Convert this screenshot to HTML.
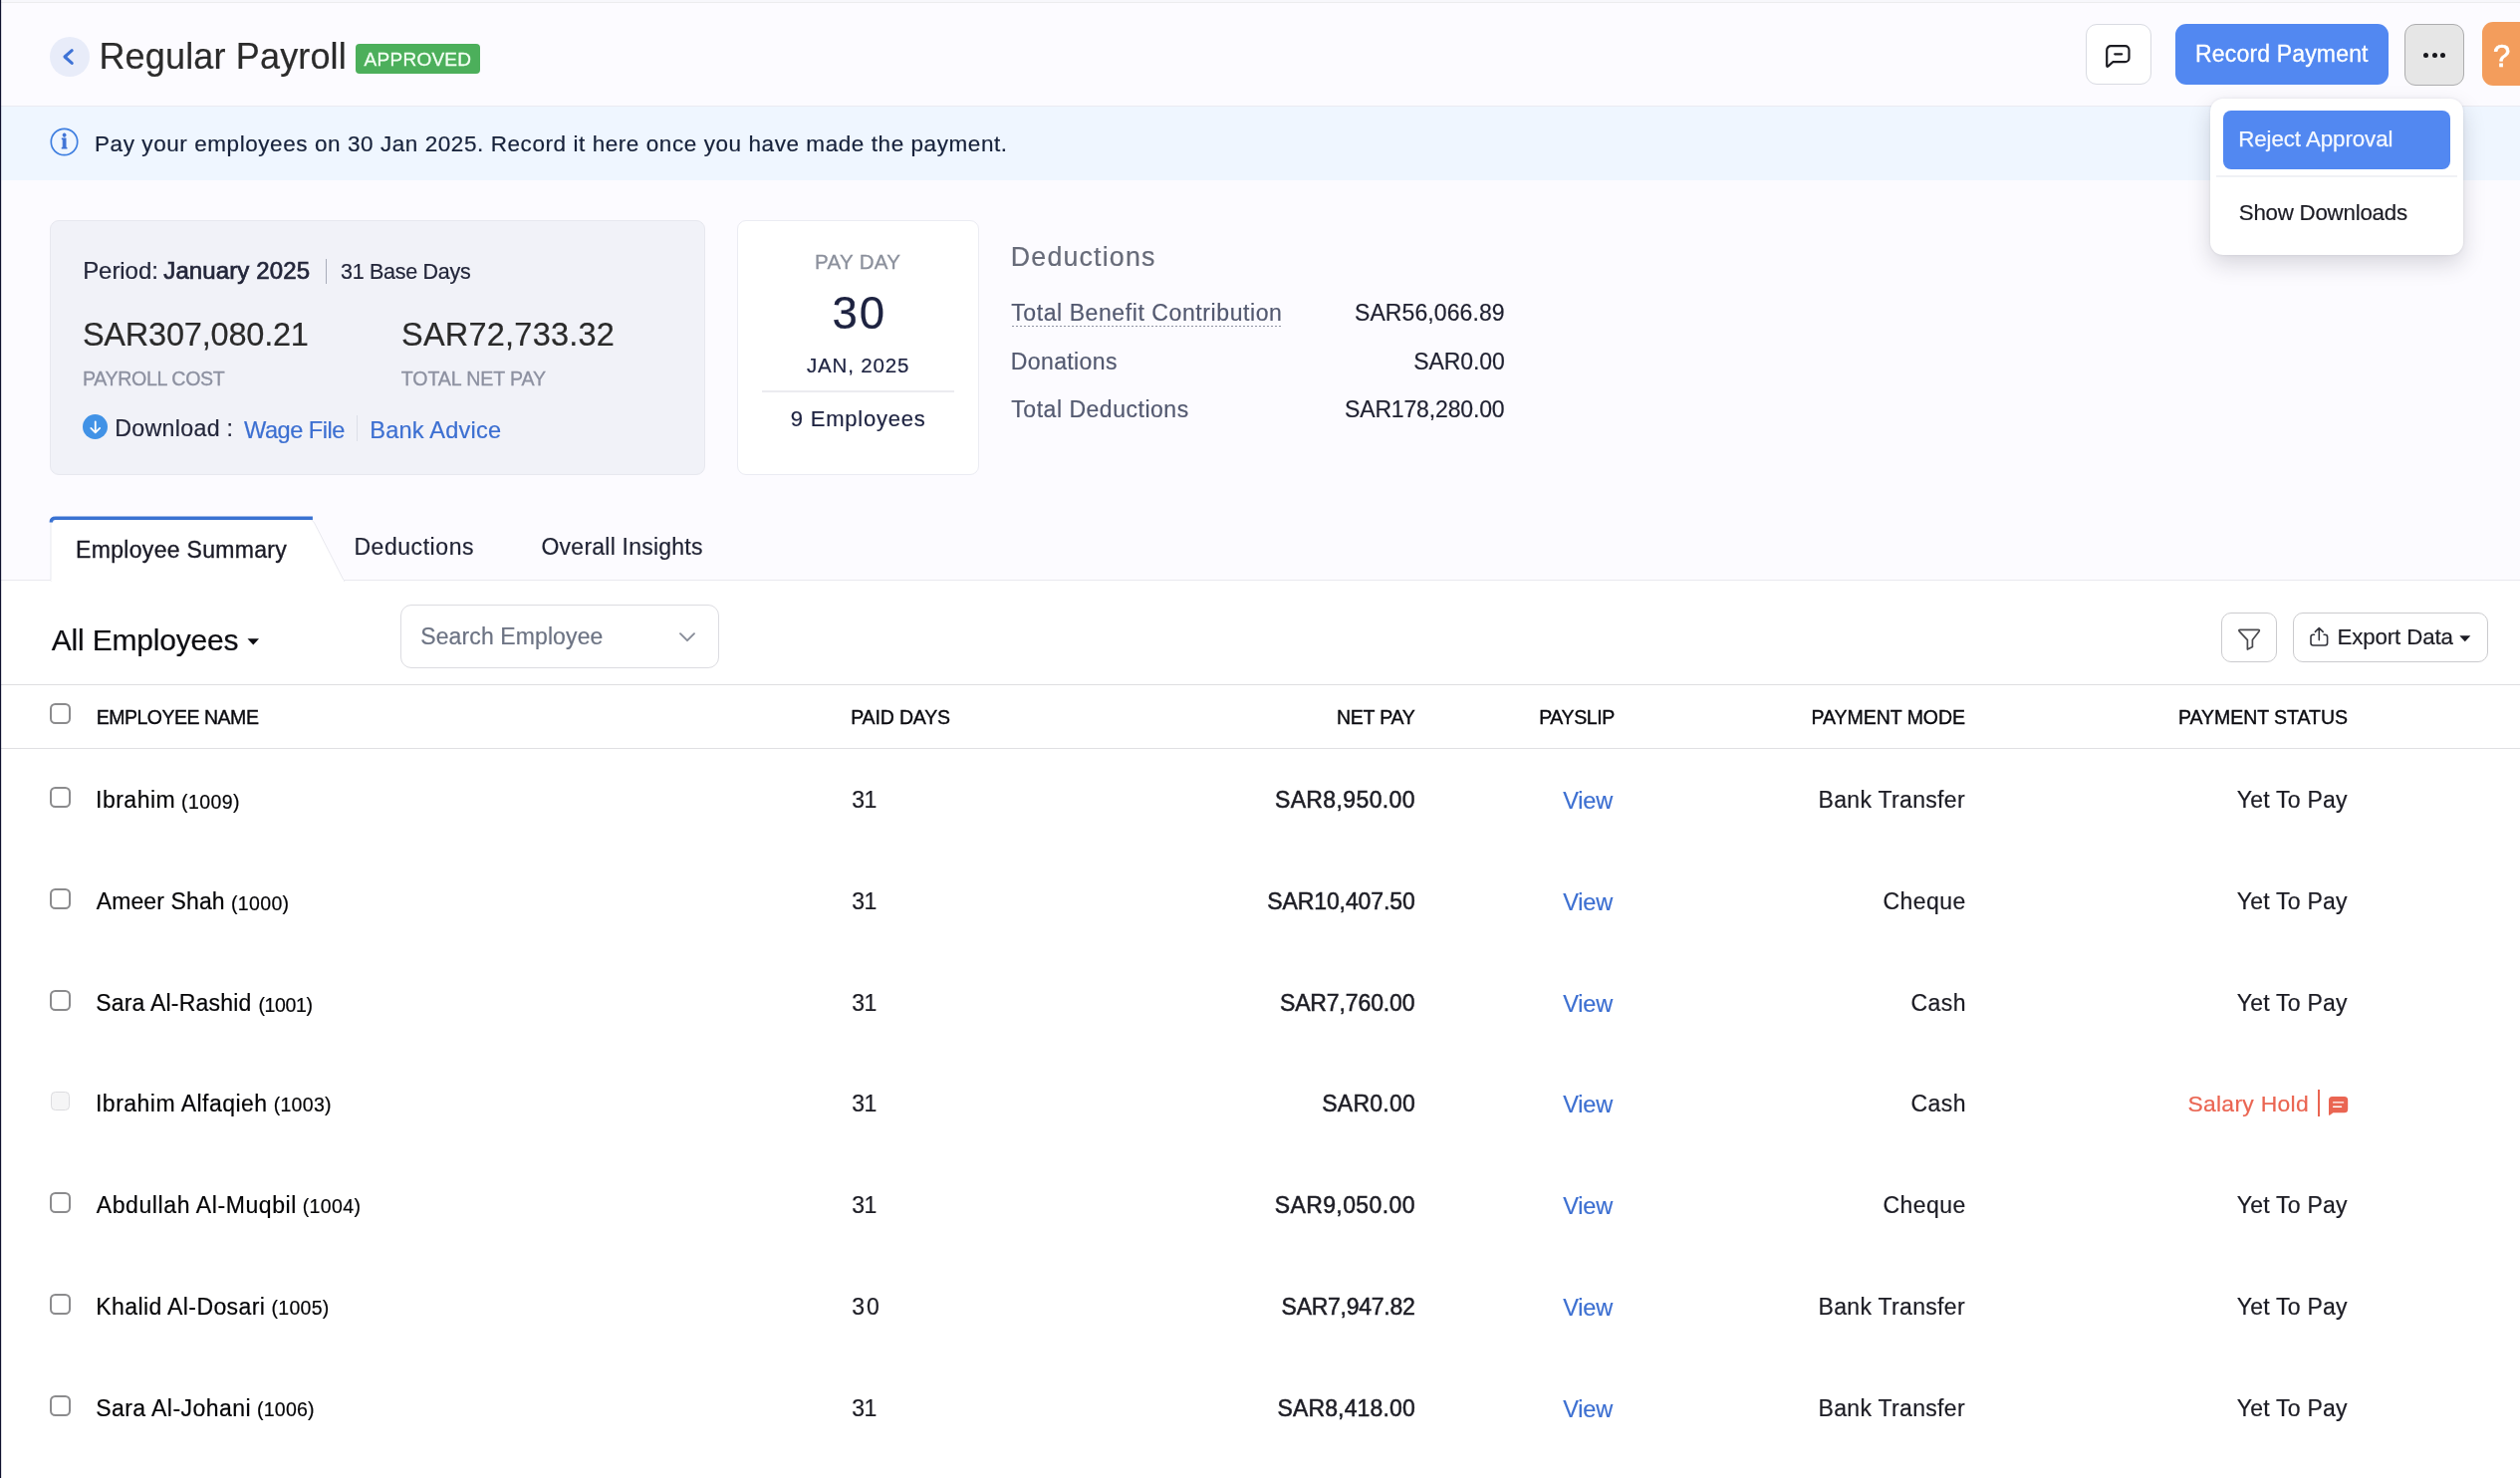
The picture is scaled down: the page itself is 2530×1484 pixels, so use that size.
<!DOCTYPE html>
<html lang="en"><head><meta charset="utf-8"><title>Regular Payroll</title>
<style>
html,body{margin:0;padding:0}
body{width:2530px;height:1484px;overflow:hidden;background:#fcfbff;font-family:"Liberation Sans",sans-serif;position:relative}
.b{position:absolute;box-sizing:border-box}
#tx{position:absolute;left:0;top:0;width:2530px;height:1484px;will-change:transform}
.t{position:absolute;white-space:nowrap;line-height:1;display:block}
svg{position:absolute;overflow:visible}
</style></head><body>
<div class="b" style="left:0px;top:0px;width:2530px;height:2px;background:#f7f7fb"></div>
<div class="b" style="left:0px;top:2px;width:2530px;height:1px;background:#ececee"></div>
<div class="b" style="left:0px;top:583px;width:2530px;height:901px;background:#fff"></div>
<div class="b" style="left:0px;top:106px;width:2530px;height:1px;background:#ebebf1"></div>
<div class="b" style="left:0px;top:107px;width:2530px;height:74px;background:#eff6ff"></div>
<div class="b" style="left:50px;top:37px;width:40px;height:40px;background:#e8ecf9;border-radius:50%"></div>
<svg style="left:50px;top:37px" width="40" height="40" viewBox="0 0 40 40"><path d="M22.2 13.7 L15 20 L22.2 26.4" fill="none" stroke="#3f73d6" stroke-width="3.1" stroke-linecap="round" stroke-linejoin="round"/></svg>
<div class="b" style="left:357px;top:44px;width:125px;height:30px;background:#4caf5b;border-radius:4px"></div>
<svg style="left:50px;top:128px;will-change:transform" width="29" height="29" viewBox="0 0 29 29"><circle cx="14.5" cy="14.5" r="13.2" fill="none" stroke="#3f7fe0" stroke-width="1.7"/><text x="14.5" y="20.6" text-anchor="middle" font-family="Liberation Serif,serif" font-weight="700" font-size="20" fill="#3f73d6" stroke="#3f73d6" stroke-width="0.9">i</text></svg>
<div class="b" style="left:2094px;top:24px;width:66px;height:61px;background:#fff;border:1px solid #d9dbe2;border-radius:11px"></div>
<svg style="left:2114.3px;top:44.5px" width="25" height="23" viewBox="0 0 25 23"><path d="M1.2 21 V5.2 a4 4 0 0 1 4 -4 H19.5 a4 4 0 0 1 4 4 V13.2 a4 4 0 0 1 -4 4 H7.2 L2.6 21.4 Q1.2 22.4 1.2 21 Z" fill="none" stroke="#1c1c22" stroke-width="2.2" stroke-linejoin="round"/><path d="M9.2 9.3 H16.2" stroke="#1c1c22" stroke-width="2.2" stroke-linecap="round"/></svg>
<div class="b" style="left:2184px;top:24px;width:214px;height:61px;background:#5288f1;border-radius:11px"></div>
<div class="b" style="left:2414px;top:24px;width:60px;height:62px;background:#e6e6e6;border:1px solid #adadaf;border-radius:11px"></div>
<div class="b" style="left:2432.9px;top:53.0px;width:5.0px;height:5.0px;background:#17171c;border-radius:50%"></div>
<div class="b" style="left:2441.5px;top:53.0px;width:5.0px;height:5.0px;background:#17171c;border-radius:50%"></div>
<div class="b" style="left:2450.2px;top:53.0px;width:5.0px;height:5.0px;background:#17171c;border-radius:50%"></div>
<div class="b" style="left:2492px;top:22px;width:48px;height:64px;background:#f39d5c;border-radius:11px"></div>
<div class="b" style="left:2219px;top:99px;width:254px;height:156.5px;background:#fff;border-radius:13px;box-shadow:0 9px 22px rgba(30,32,50,.17),0 0 3px rgba(30,32,50,.10)"></div>
<div class="b" style="left:2232px;top:111px;width:228px;height:58.599999999999994px;background:#5288f1;border-radius:8px"></div>
<div class="b" style="left:2225px;top:176.2px;width:242px;height:1.700000000000017px;background:#f0f1f5"></div>
<div class="b" style="left:50px;top:221px;width:658px;height:255.5px;background:#f1f2f8;border:1px solid #e7e8ef;border-radius:9px"></div>
<div class="b" style="left:327px;top:260px;width:1.3000000000000114px;height:25px;background:#a9adba"></div>
<div class="b" style="left:83px;top:415.8px;width:25.400000000000006px;height:25.399999999999977px;background:#4192e6;border-radius:50%"></div>
<svg style="left:83px;top:415.8px" width="25.4" height="25.4" viewBox="0 0 25.4 25.4"><path d="M12.75 7.3 V18 M8.3 13.9 L12.75 18.3 L17.2 13.9" fill="none" stroke="#fff" stroke-width="1.8" stroke-linecap="round" stroke-linejoin="round"/></svg>
<div class="b" style="left:358px;top:416.5px;width:1.1999999999999886px;height:26.0px;background:#dcdfe8"></div>
<div class="b" style="left:740px;top:221px;width:243px;height:255.5px;background:#fff;border:1px solid #ebecf3;border-radius:9px"></div>
<div class="b" style="left:765px;top:392px;width:193px;height:1.6000000000000227px;background:#ebebf0"></div>
<div class="b" style="left:1015.5px;top:327px;width:270.5px;height:1px;background:repeating-linear-gradient(90deg,#8f93a3 0 2.5px,transparent 2.5px 4px)"></div>
<div class="b" style="left:0px;top:582px;width:2530px;height:1px;background:#e9e9ef"></div>
<svg style="left:0;top:515px" width="400" height="72" viewBox="0 515 400 72"><path d="M51 583.5 V526 Q51 521 56 521 H309 Q313.5 521 315.6 525 L345.5 583.5 Z" fill="#fff" stroke="#e9e9ef" stroke-width="1"/><path d="M51.3 524.5 Q51.3 520.3 55.8 520.3 H313.9" fill="none" stroke="#3a72d2" stroke-width="3.5"/><rect x="51.5" y="582" width="293.5" height="3" fill="#fff"/></svg>
<svg style="left:248px;top:641px" width="13" height="7" viewBox="0 0 13 7"><path d="M0.5 0.3 H12 L6.25 6.4 Z" fill="#0d0d12"/></svg>
<div class="b" style="left:402px;top:607px;width:320px;height:64px;background:#fff;border:1px solid #dcdce1;border-radius:11px"></div>
<svg style="left:681px;top:633.6px" width="18" height="12" viewBox="0 0 18 12"><path d="M2 2.2 L9 9.2 L16 2.2" fill="none" stroke="#878c98" stroke-width="1.9" stroke-linecap="round" stroke-linejoin="round"/></svg>
<div class="b" style="left:2230px;top:615px;width:56px;height:50px;background:#fff;border:1px solid #cbcbce;border-radius:10px"></div>
<svg style="left:2246px;top:630px" width="24" height="24" viewBox="0 0 24 24"><path d="M3 2.3 H21.2 Q23 2.3 22 3.9 L15.4 12.6 V19.6 L10.4 22 V12.6 L2.2 3.9 Q1.2 2.3 3 2.3 Z" fill="none" stroke="#4a4a4e" stroke-width="1.7" stroke-linejoin="round"/></svg>
<div class="b" style="left:2302px;top:615px;width:196px;height:50px;background:#fff;border:1px solid #cbcbce;border-radius:10px"></div>
<svg style="left:2318px;top:629px" width="22" height="22" viewBox="0 0 22 22"><path d="M5.5 8.2 H4.4 a2.4 2.4 0 0 0 -2.4 2.4 V16.6 a2.4 2.4 0 0 0 2.4 2.4 H16.2 a2.4 2.4 0 0 0 2.4 -2.4 V10.6 a2.4 2.4 0 0 0 -2.4 -2.4 H15.1 M10.3 13.6 V1.8 M6.4 5.4 L10.3 1.5 L14.2 5.4" fill="none" stroke="#33343c" stroke-width="1.6" stroke-linecap="round" stroke-linejoin="round"/></svg>
<svg style="left:2468.8px;top:637.8px" width="12" height="7" viewBox="0 0 12 7"><path d="M0.3 0.3 H11.3 L5.8 6.2 Z" fill="#1c1c24"/></svg>
<div class="b" style="left:0px;top:686.5px;width:2530px;height:1.2999999999999545px;background:#dedee1"></div>
<div class="b" style="left:0px;top:751px;width:2530px;height:1.2000000000000455px;background:#e0e0e3"></div>
<div class="b" style="left:50px;top:705.7px;width:21px;height:21.0px;background:#fff;border:2px solid #8b8b8d;border-radius:5.5px"></div>
<div class="b" style="left:50px;top:790px;width:21px;height:21px;background:#fff;border:2px solid #8b8b8d;border-radius:5.5px"></div>
<div class="b" style="left:50px;top:892px;width:21px;height:21px;background:#fff;border:2px solid #8b8b8d;border-radius:5.5px"></div>
<div class="b" style="left:50px;top:994px;width:21px;height:21px;background:#fff;border:2px solid #8b8b8d;border-radius:5.5px"></div>
<div class="b" style="left:51px;top:1096px;width:19px;height:19px;background:#f5f5f6;border:1.5px solid #dcdcdf;border-radius:4.5px"></div>
<div class="b" style="left:2327px;top:1094.2px;width:2px;height:26.799999999999955px;background:#ea6552"></div>
<svg style="left:2338px;top:1101.2px" width="19.2" height="19" viewBox="0 0 19.2 19"><path d="M3.6 0 H15.6 a3.6 3.6 0 0 1 3.6 3.6 V12.7 a3.6 3.6 0 0 1 -3.6 3.6 H4.4 L1 18.7 Q0 19.2 0 18 V3.6 A3.6 3.6 0 0 1 3.6 0 Z" fill="#ea6552"/><path d="M4.6 5.9 H14.6 M4.6 10.3 H12.6" stroke="#fff" stroke-width="1.35" stroke-linecap="round"/></svg>
<div class="b" style="left:50px;top:1197px;width:21px;height:21px;background:#fff;border:2px solid #8b8b8d;border-radius:5.5px"></div>
<div class="b" style="left:50px;top:1299px;width:21px;height:21px;background:#fff;border:2px solid #8b8b8d;border-radius:5.5px"></div>
<div class="b" style="left:50px;top:1401px;width:21px;height:21px;background:#fff;border:2px solid #8b8b8d;border-radius:5.5px"></div>
<div class="b" style="left:0px;top:0px;width:1px;height:1484px;background:#10122f"></div>
<div class="b" style="left:1px;top:0px;width:1px;height:1484px;background:rgba(16,18,47,.14)"></div>
<div id="tx">
<span class="t" style="left:99.48px;top:39px;font-size:36px;color:#2b2b2b;letter-spacing:0.157px;-webkit-text-stroke:0.2px #2b2b2b;">Regular Payroll</span>
<span class="t" style="left:365.62px;top:50px;font-size:19px;color:#f3fff3;letter-spacing:0.260px;-webkit-text-stroke:0.3px #f3fff3;">APPROVED</span>
<span class="t" style="left:95.03px;top:134px;font-size:22.5px;color:#16213a;letter-spacing:0.569px;-webkit-text-stroke:0.2px #16213a;">Pay your employees on 30 Jan 2025. Record it here once you have made the payment.</span>
<span class="t" style="left:2204.06px;top:43px;font-size:23px;color:#fff;letter-spacing:0.164px;-webkit-text-stroke:0.3px #fff;">Record Payment</span>
<span class="t" style="left:2503.00px;top:41px;font-size:31px;color:#fff;letter-spacing:0.000px;-webkit-text-stroke:0.7px #fff;">?</span>
<span class="t" style="left:2247.13px;top:129px;font-size:22.3px;color:#f4f8ff;letter-spacing:-0.056px;-webkit-text-stroke:0.25px #f4f8ff;">Reject Approval</span>
<span class="t" style="left:2247.76px;top:203px;font-size:22.3px;color:#1c1c24;letter-spacing:-0.229px;-webkit-text-stroke:0.2px #1c1c24;">Show Downloads</span>
<span class="t" style="left:83.16px;top:260px;font-size:24px;color:#23263a;letter-spacing:-0.053px;-webkit-text-stroke:0.2px #23263a;">Period:</span>
<span class="t" style="left:164.29px;top:260px;font-size:24px;color:#23263a;letter-spacing:0.116px;-webkit-text-stroke:0.7px #23263a;">January 2025</span>
<span class="t" style="left:341.96px;top:263px;font-size:21.5px;color:#23263a;letter-spacing:-0.280px;-webkit-text-stroke:0.2px #23263a;">31 Base Days</span>
<span class="t" style="left:82.90px;top:320px;font-size:32.5px;color:#2a2a2a;letter-spacing:-0.205px;-webkit-text-stroke:0.2px #2a2a2a;">SAR307,080.21</span>
<span class="t" style="left:403.02px;top:320px;font-size:32.5px;color:#2a2a2a;letter-spacing:0.220px;-webkit-text-stroke:0.2px #2a2a2a;">SAR72,733.32</span>
<span class="t" style="left:83.00px;top:371px;font-size:19.6px;color:#8c90a0;letter-spacing:-0.354px;-webkit-text-stroke:0.3px #8c90a0;">PAYROLL COST</span>
<span class="t" style="left:402.85px;top:371px;font-size:19.6px;color:#8c90a0;letter-spacing:-0.116px;-webkit-text-stroke:0.3px #8c90a0;">TOTAL NET PAY</span>
<span class="t" style="left:115.24px;top:419px;font-size:23.2px;color:#23263a;letter-spacing:0.311px;-webkit-text-stroke:0.2px #23263a;">Download :</span>
<span class="t" style="left:245.00px;top:421px;font-size:23.6px;color:#3c6fd1;letter-spacing:-0.493px;-webkit-text-stroke:0.2px #3c6fd1;">Wage File</span>
<span class="t" style="left:371.22px;top:421px;font-size:23.6px;color:#3c6fd1;letter-spacing:0.198px;-webkit-text-stroke:0.2px #3c6fd1;">Bank Advice</span>
<span class="t" style="left:818.00px;top:253px;font-size:20.5px;color:#8b909c;letter-spacing:0.342px;-webkit-text-stroke:0.3px #8b909c;">PAY DAY</span>
<span class="t" style="left:835.42px;top:292px;font-size:45.5px;color:#1d2240;letter-spacing:1.966px;-webkit-text-stroke:0.2px #1d2240;">30</span>
<span class="t" style="left:810.00px;top:357px;font-size:20.5px;color:#1d2240;letter-spacing:0.822px;-webkit-text-stroke:0.2px #1d2240;">JAN, 2025</span>
<span class="t" style="left:793.80px;top:410px;font-size:22px;color:#1d2240;letter-spacing:0.770px;-webkit-text-stroke:0.2px #1d2240;">9 Employees</span>
<span class="t" style="left:1014.80px;top:245px;font-size:26.8px;color:#676b79;letter-spacing:1.171px;-webkit-text-stroke:0.2px #676b79;">Deductions</span>
<span class="t" style="left:1015.19px;top:303px;font-size:23px;color:#535970;letter-spacing:0.587px;-webkit-text-stroke:0.2px #535970;">Total Benefit Contribution</span>
<span class="t" style="left:1360.00px;top:303px;font-size:23px;color:#1f2030;letter-spacing:0.089px;-webkit-text-stroke:0.2px #1f2030;">SAR56,066.89</span>
<span class="t" style="left:1014.79px;top:352px;font-size:23px;color:#535970;letter-spacing:0.393px;-webkit-text-stroke:0.2px #535970;">Donations</span>
<span class="t" style="left:1419.26px;top:352px;font-size:23px;color:#1f2030;letter-spacing:-0.101px;-webkit-text-stroke:0.2px #1f2030;">SAR0.00</span>
<span class="t" style="left:1015.33px;top:400px;font-size:23px;color:#535970;letter-spacing:0.519px;-webkit-text-stroke:0.2px #535970;">Total Deductions</span>
<span class="t" style="left:1350.00px;top:400px;font-size:23px;color:#1f2030;letter-spacing:-0.151px;-webkit-text-stroke:0.2px #1f2030;">SAR178,280.00</span>
<span class="t" style="left:76.10px;top:541px;font-size:23px;color:#1a1a26;letter-spacing:0.309px;-webkit-text-stroke:0.35px #1a1a26;">Employee Summary</span>
<span class="t" style="left:355.40px;top:538px;font-size:23px;color:#1f2233;letter-spacing:0.559px;-webkit-text-stroke:0.2px #1f2233;">Deductions</span>
<span class="t" style="left:543.51px;top:538px;font-size:23px;color:#1f2233;letter-spacing:0.232px;-webkit-text-stroke:0.2px #1f2233;">Overall Insights</span>
<span class="t" style="left:51.80px;top:628px;font-size:30px;color:#0d0d12;letter-spacing:-0.190px;-webkit-text-stroke:0.2px #0d0d12;">All Employees</span>
<span class="t" style="left:422.27px;top:628px;font-size:23px;color:#6c7383;letter-spacing:0.108px;-webkit-text-stroke:0.2px #6c7383;">Search Employee</span>
<span class="t" style="left:2346.38px;top:629px;font-size:22.3px;color:#1c1c24;letter-spacing:-0.114px;-webkit-text-stroke:0.2px #1c1c24;">Export Data</span>
<span class="t" style="left:96.70px;top:711px;font-size:19.5px;color:#0b0b10;letter-spacing:-0.487px;-webkit-text-stroke:0.38px #0b0b10;">EMPLOYEE NAME</span>
<span class="t" style="left:854.16px;top:711px;font-size:19.5px;color:#0b0b10;letter-spacing:-0.152px;-webkit-text-stroke:0.38px #0b0b10;">PAID DAYS</span>
<span class="t" style="left:1342.00px;top:711px;font-size:19.5px;color:#0b0b10;letter-spacing:-0.233px;-webkit-text-stroke:0.38px #0b0b10;">NET PAY</span>
<span class="t" style="left:1545.16px;top:711px;font-size:19.5px;color:#0b0b10;letter-spacing:-0.365px;-webkit-text-stroke:0.38px #0b0b10;">PAYSLIP</span>
<span class="t" style="left:1818.50px;top:711px;font-size:19.5px;color:#0b0b10;letter-spacing:-0.035px;-webkit-text-stroke:0.38px #0b0b10;">PAYMENT MODE</span>
<span class="t" style="left:2187.00px;top:711px;font-size:19.5px;color:#0b0b10;letter-spacing:-0.040px;-webkit-text-stroke:0.38px #0b0b10;">PAYMENT STATUS</span>
<span class="t" style="left:96.00px;top:792px;font-size:23px;color:#050507;letter-spacing:0.511px;-webkit-text-stroke:0.2px #050507;">Ibrahim</span>
<span class="t" style="left:182.02px;top:796px;font-size:19.5px;color:#050507;letter-spacing:0.401px;-webkit-text-stroke:0.2px #050507;">(1009)</span>
<span class="t" style="left:855.36px;top:792px;font-size:23px;color:#1c1c24;letter-spacing:-0.576px;-webkit-text-stroke:0.2px #1c1c24;">31</span>
<span class="t" style="left:1279.93px;top:792px;font-size:23px;color:#1c1c24;letter-spacing:0.382px;-webkit-text-stroke:0.5px #1c1c24;">SAR8,950.00</span>
<span class="t" style="left:1569.29px;top:793px;font-size:23.5px;color:#3c6fd1;letter-spacing:-0.202px;-webkit-text-stroke:0.2px #3c6fd1;">View</span>
<span class="t" style="left:1825.59px;top:792px;font-size:23px;color:#1c1c24;letter-spacing:0.318px;-webkit-text-stroke:0.2px #1c1c24;">Bank Transfer</span>
<span class="t" style="left:2245.72px;top:792px;font-size:23px;color:#1c1c24;letter-spacing:0.228px;-webkit-text-stroke:0.2px #1c1c24;">Yet To Pay</span>
<span class="t" style="left:96.74px;top:894px;font-size:23px;color:#050507;letter-spacing:0.111px;-webkit-text-stroke:0.2px #050507;">Ameer Shah</span>
<span class="t" style="left:232.02px;top:898px;font-size:19.5px;color:#050507;letter-spacing:0.341px;-webkit-text-stroke:0.2px #050507;">(1000)</span>
<span class="t" style="left:855.36px;top:894px;font-size:23px;color:#1c1c24;letter-spacing:-0.576px;-webkit-text-stroke:0.2px #1c1c24;">31</span>
<span class="t" style="left:1272.20px;top:894px;font-size:23px;color:#1c1c24;letter-spacing:-0.093px;-webkit-text-stroke:0.5px #1c1c24;">SAR10,407.50</span>
<span class="t" style="left:1569.29px;top:895px;font-size:23.5px;color:#3c6fd1;letter-spacing:-0.202px;-webkit-text-stroke:0.2px #3c6fd1;">View</span>
<span class="t" style="left:1890.43px;top:894px;font-size:23px;color:#1c1c24;letter-spacing:0.449px;-webkit-text-stroke:0.2px #1c1c24;">Cheque</span>
<span class="t" style="left:2245.72px;top:894px;font-size:23px;color:#1c1c24;letter-spacing:0.228px;-webkit-text-stroke:0.2px #1c1c24;">Yet To Pay</span>
<span class="t" style="left:96.14px;top:996px;font-size:23px;color:#050507;letter-spacing:0.218px;-webkit-text-stroke:0.2px #050507;">Sara Al-Rashid</span>
<span class="t" style="left:259.42px;top:1000px;font-size:19.5px;color:#050507;letter-spacing:-0.358px;-webkit-text-stroke:0.2px #050507;">(1001)</span>
<span class="t" style="left:855.36px;top:996px;font-size:23px;color:#1c1c24;letter-spacing:-0.576px;-webkit-text-stroke:0.2px #1c1c24;">31</span>
<span class="t" style="left:1284.93px;top:996px;font-size:23px;color:#1c1c24;letter-spacing:-0.118px;-webkit-text-stroke:0.5px #1c1c24;">SAR7,760.00</span>
<span class="t" style="left:1569.29px;top:997px;font-size:23.5px;color:#3c6fd1;letter-spacing:-0.202px;-webkit-text-stroke:0.2px #3c6fd1;">View</span>
<span class="t" style="left:1918.47px;top:996px;font-size:23px;color:#1c1c24;letter-spacing:0.466px;-webkit-text-stroke:0.2px #1c1c24;">Cash</span>
<span class="t" style="left:2245.72px;top:996px;font-size:23px;color:#1c1c24;letter-spacing:0.228px;-webkit-text-stroke:0.2px #1c1c24;">Yet To Pay</span>
<span class="t" style="left:96.00px;top:1097px;font-size:23px;color:#050507;letter-spacing:0.480px;-webkit-text-stroke:0.2px #050507;">Ibrahim Alfaqieh</span>
<span class="t" style="left:274.64px;top:1100px;font-size:19.5px;color:#050507;letter-spacing:0.309px;-webkit-text-stroke:0.2px #050507;">(1003)</span>
<span class="t" style="left:855.36px;top:1097px;font-size:23px;color:#1c1c24;letter-spacing:-0.576px;-webkit-text-stroke:0.2px #1c1c24;">31</span>
<span class="t" style="left:1327.20px;top:1097px;font-size:23px;color:#1c1c24;letter-spacing:0.256px;-webkit-text-stroke:0.5px #1c1c24;">SAR0.00</span>
<span class="t" style="left:1569.29px;top:1098px;font-size:23.5px;color:#3c6fd1;letter-spacing:-0.202px;-webkit-text-stroke:0.2px #3c6fd1;">View</span>
<span class="t" style="left:1918.47px;top:1097px;font-size:23px;color:#1c1c24;letter-spacing:0.466px;-webkit-text-stroke:0.2px #1c1c24;">Cash</span>
<span class="t" style="left:2196.38px;top:1097px;font-size:22.9px;color:#ea6552;letter-spacing:0.303px;-webkit-text-stroke:0.2px #ea6552;">Salary Hold</span>
<span class="t" style="left:96.78px;top:1199px;font-size:23px;color:#050507;letter-spacing:0.595px;-webkit-text-stroke:0.2px #050507;">Abdullah Al-Muqbil</span>
<span class="t" style="left:303.76px;top:1202px;font-size:19.5px;color:#050507;letter-spacing:0.353px;-webkit-text-stroke:0.2px #050507;">(1004)</span>
<span class="t" style="left:855.36px;top:1199px;font-size:23px;color:#1c1c24;letter-spacing:-0.576px;-webkit-text-stroke:0.2px #1c1c24;">31</span>
<span class="t" style="left:1279.63px;top:1199px;font-size:23px;color:#1c1c24;letter-spacing:0.412px;-webkit-text-stroke:0.5px #1c1c24;">SAR9,050.00</span>
<span class="t" style="left:1569.29px;top:1200px;font-size:23.5px;color:#3c6fd1;letter-spacing:-0.202px;-webkit-text-stroke:0.2px #3c6fd1;">View</span>
<span class="t" style="left:1890.43px;top:1199px;font-size:23px;color:#1c1c24;letter-spacing:0.449px;-webkit-text-stroke:0.2px #1c1c24;">Cheque</span>
<span class="t" style="left:2245.72px;top:1199px;font-size:23px;color:#1c1c24;letter-spacing:0.228px;-webkit-text-stroke:0.2px #1c1c24;">Yet To Pay</span>
<span class="t" style="left:96.29px;top:1301px;font-size:23px;color:#050507;letter-spacing:0.396px;-webkit-text-stroke:0.2px #050507;">Khalid Al-Dosari</span>
<span class="t" style="left:272.53px;top:1304px;font-size:19.5px;color:#050507;letter-spacing:0.279px;-webkit-text-stroke:0.2px #050507;">(1005)</span>
<span class="t" style="left:855.36px;top:1301px;font-size:23px;color:#1c1c24;letter-spacing:1.844px;-webkit-text-stroke:0.2px #1c1c24;">30</span>
<span class="t" style="left:1286.60px;top:1301px;font-size:23px;color:#1c1c24;letter-spacing:-0.263px;-webkit-text-stroke:0.5px #1c1c24;">SAR7,947.82</span>
<span class="t" style="left:1569.29px;top:1302px;font-size:23.5px;color:#3c6fd1;letter-spacing:-0.202px;-webkit-text-stroke:0.2px #3c6fd1;">View</span>
<span class="t" style="left:1825.59px;top:1301px;font-size:23px;color:#1c1c24;letter-spacing:0.318px;-webkit-text-stroke:0.2px #1c1c24;">Bank Transfer</span>
<span class="t" style="left:2245.72px;top:1301px;font-size:23px;color:#1c1c24;letter-spacing:0.228px;-webkit-text-stroke:0.2px #1c1c24;">Yet To Pay</span>
<span class="t" style="left:96.14px;top:1403px;font-size:23px;color:#050507;letter-spacing:0.445px;-webkit-text-stroke:0.2px #050507;">Sara Al-Johani</span>
<span class="t" style="left:258.00px;top:1406px;font-size:19.5px;color:#050507;letter-spacing:0.238px;-webkit-text-stroke:0.2px #050507;">(1006)</span>
<span class="t" style="left:855.36px;top:1403px;font-size:23px;color:#1c1c24;letter-spacing:-0.576px;-webkit-text-stroke:0.2px #1c1c24;">31</span>
<span class="t" style="left:1282.40px;top:1403px;font-size:23px;color:#1c1c24;letter-spacing:0.157px;-webkit-text-stroke:0.5px #1c1c24;">SAR8,418.00</span>
<span class="t" style="left:1569.29px;top:1404px;font-size:23.5px;color:#3c6fd1;letter-spacing:-0.202px;-webkit-text-stroke:0.2px #3c6fd1;">View</span>
<span class="t" style="left:1825.59px;top:1403px;font-size:23px;color:#1c1c24;letter-spacing:0.318px;-webkit-text-stroke:0.2px #1c1c24;">Bank Transfer</span>
<span class="t" style="left:2245.72px;top:1403px;font-size:23px;color:#1c1c24;letter-spacing:0.228px;-webkit-text-stroke:0.2px #1c1c24;">Yet To Pay</span>
</div>
</body></html>
